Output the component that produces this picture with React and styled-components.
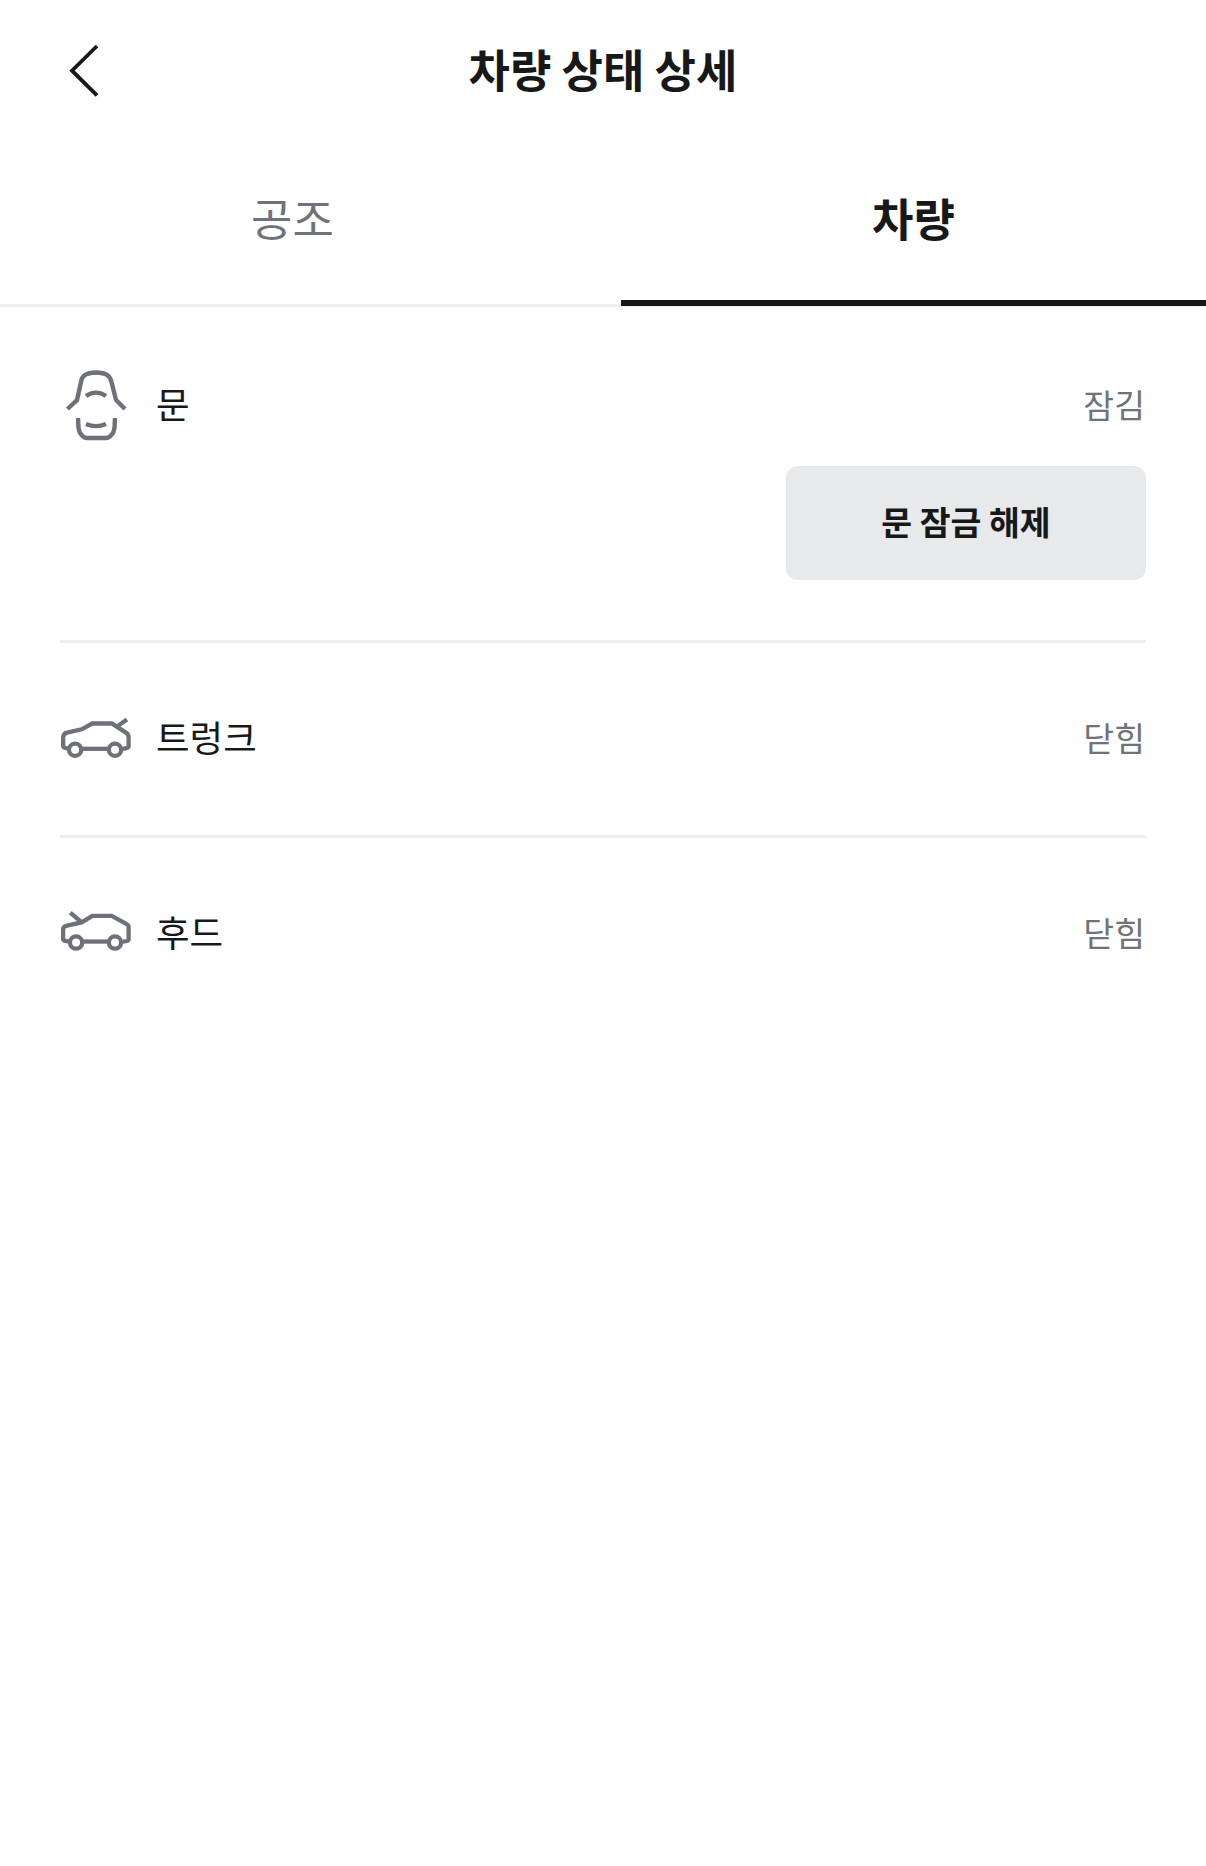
import styled, { createGlobalStyle } from 'styled-components';

const GlobalStyle = createGlobalStyle`
  html, body {
    margin: 0;
    padding: 0;
    background: #fff;
  }
  body {
    font-family: 'Noto Sans CJK KR', 'Noto Sans', sans-serif;
    color: #17181a;
  }
`;

const DoorIcon = () => (
  <svg width='74' height='80' viewBox='0 0 74 80' fill='none' stroke='#6e717a' strokeWidth='4.4'>
    <path d='M7.5 44 L17 35 L21 17 C22 10 26 8 36 7.5 C46 8 50 10 51.5 17 L56 35 L65 44' />
    <path d='M26 31 C32 26.5 40 26.5 46 31' />
    <path d='M18 53 L18.5 63 C19 68 23 73 27 73 L46 73 C50 73 54 68 54.5 63 L55 53' />
    <path d='M26 59 C32 61.5 40 61.5 46 59' />
  </svg>
);

const TrunkIcon = () => (
  <svg width='74' height='50' viewBox='-0.5 1.5 76 51.4' fill='none' stroke='#6e717a' strokeWidth='4.4'>
    <path d='M9 38.3 L5 37.5 Q2.7 37 2.7 35 L2.7 26.7 Q3 22.5 6.7 21.7 L21.7 18.3 L32.7 12.3 L52.7 12.3 L67.3 21.7 Q70 23.5 70 26.7 L70 36 Q70 38 64 38.3' />
    <path d='M21.7 38.3 L49 38.3' />
    <circle cx='15' cy='39.3' r='6.3' />
    <circle cx='56' cy='39.3' r='6.3' />
    <path d='M57.3 16 L68.3 8.3' />
  </svg>
);

const HoodIcon = () => (
  <svg width='74' height='50' viewBox='-0.5 -1.5 76 51.4' fill='none' stroke='#6e717a' strokeWidth='4.4'>
    <path d='M9 33 L5 32.2 Q2.7 31.7 2.7 30 L2.7 20 Q3 17.5 6.7 16.7 L21.7 13.3 L32.7 6.7 L52.7 6.7 L68 15 Q70 16 70 18.3 L70 31 Q70 33 64 33' />
    <path d='M23 33 L49 33' />
    <circle cx='16' cy='34' r='6.3' />
    <circle cx='56' cy='34' r='6.3' />
    <path d='M10 3.3 L21.7 13.3' />
  </svg>
);

const App = () => {
  return (
    <Page className='Page'>
      <GlobalStyle />
      {/* Header */}
      <Header className='Header'>
        <BackButton aria-label='back'>
          <svg width='40' height='62' viewBox='0 0 40 62' fill='none' stroke='#17181a' strokeWidth='3.8'>
            <path d='M32 6 L7 30.7 L32 55.3' />
          </svg>
        </BackButton>
        <Title>차량 상태 상세</Title>
      </Header>

      {/* Tabs */}
      <Tabs className='Tabs'>
        <Tab>공조</Tab>
        <Tab $active>차량</Tab>
      </Tabs>

      {/* Status list */}
      <List className='List'>
        <Item $top={60} $bottom={60}>
          <Row>
            <IconBox><DoorIcon /></IconBox>
            <Label>문</Label>
            <Status>잠김</Status>
          </Row>
          <Actions>
            <ActionButton>문 잠금 해제</ActionButton>
          </Actions>
        </Item>
        <Item $top={57} $bottom={59}>
          <Row>
            <IconBox><TrunkIcon /></IconBox>
            <Label>트렁크</Label>
            <Status>닫힘</Status>
          </Row>
        </Item>
        <Item $top={57} $bottom={0} $last>
          <Row>
            <IconBox><HoodIcon /></IconBox>
            <Label>후드</Label>
            <Status>닫힘</Status>
          </Row>
        </Item>
      </List>
    </Page>
  );
};
export default App;

const Page = styled.div`
  width: 1206px;
  min-height: 1866px;
  background: #fff;
  overflow: hidden;
`;

const Header = styled.header`
  position: relative;
  height: 140px;
  display: flex;
  align-items: center;
  justify-content: center;
`;

const BackButton = styled.button`
  position: absolute;
  left: 65px;
  top: 40px;
  padding: 0;
  border: 0;
  background: none;
  display: flex;
`;

const Title = styled.h1`
  margin: 0 0 2px;
  font-size: 45px;
  line-height: 60px;
  font-weight: 700;
  color: #17181a;
`;

const Tabs = styled.div`
  display: grid;
  grid-template-columns: 1fr 1fr;
  column-gap: 36px;
  height: 164px;
  border-bottom: 3px solid #eeeeef;
`;

const Tab = styled.div`
  position: relative;
  display: flex;
  align-items: center;
  justify-content: center;
  padding-bottom: 10px;
  font-size: 45px;
  font-weight: ${(p) => (p.$active ? 700 : 400)};
  color: ${(p) => (p.$active ? '#17181a' : '#6f7279')};

  ${(p) =>
    p.$active &&
    `
    &::after {
      content: '';
      position: absolute;
      left: 0;
      right: 0;
      bottom: -2px;
      height: 6px;
      background: #17181a;
    }
  `}
`;

const List = styled.div`
  padding: 0 60px;
`;

const Item = styled.section`
  padding-top: ${(p) => p.$top}px;
  padding-bottom: ${(p) => p.$bottom}px;
  border-bottom: ${(p) => (p.$last ? '0' : '3px solid #eeeeef')};
`;

const Row = styled.div`
  display: flex;
  align-items: center;
  height: 76px;
`;

const IconBox = styled.div`
  width: 96px;
  display: flex;
  align-items: center;
`;

const Label = styled.span`
  padding-bottom: 3px;
  font-size: 36.5px;
  color: #17181a;
`;

const Status = styled.span`
  margin-left: auto;
  padding-bottom: 3px;
  padding-right: 1px;
  font-size: 33.5px;
  color: #6f7279;
`;

const Actions = styled.div`
  display: flex;
  justify-content: flex-end;
  margin-top: 23px;
`;

const ActionButton = styled.button`
  width: 360px;
  height: 114px;
  padding: 0 0 5px;
  border: 0;
  border-radius: 12px;
  background: #e8e9eb;
  font-family: inherit;
  font-size: 33.5px;
  font-weight: 700;
  color: #17181a;
`;
